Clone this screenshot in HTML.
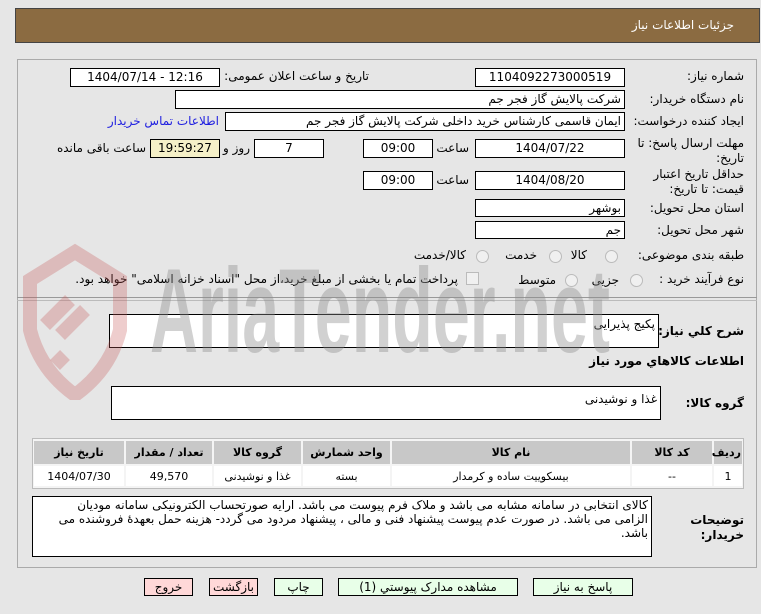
<!DOCTYPE html>
<html><head><meta charset="utf-8"><style>
body{margin:0;width:761px;height:614px;background:#e6e6e6;font-family:Tahoma,"DejaVu Sans","Liberation Sans",sans-serif;font-size:12px;color:#000;position:relative;overflow:hidden}
.a{position:absolute}
.box{position:absolute;background:#fff;border:1px solid #000;box-sizing:border-box;height:19px;line-height:17px;font-size:12px}
.c{text-align:center}.r{text-align:right;padding-right:3px;direction:rtl}
.lbl{position:absolute;direction:rtl;text-align:right;font-size:12px;white-space:nowrap}
.btn{position:absolute;top:578px;height:18px;border:1px solid #000;box-sizing:border-box;text-align:center;line-height:16px;font-size:12px;background:#e8ffe8}
.pink{background:#ffd8d8}
table{border-collapse:separate;border-spacing:2px;table-layout:fixed}
td{text-align:center;font-size:11px}
.rad{position:absolute;width:11px;height:11px;border-radius:50%;border:1px solid #bbb;background:#f0f0f0}
</style></head><body>
<div class="a" style="left:15px;top:8px;width:745px;height:35px;background:#8b6b41;border:1px solid #444;box-sizing:border-box"></div>
<div class="lbl" style="right:27px;top:18px;color:#fff;font-size:12px">جزئیات اطلاعات نیاز</div>
<div class="a" style="left:17px;top:59px;width:740px;height:509px;border:1px solid #aaa;box-sizing:border-box"></div>
<div class="a" style="left:17px;top:297px;width:740px;height:2px;border-top:1px solid #999;border-bottom:1px solid #bbb"></div>
<div class="lbl" style="right:17px;top:69px">شماره نیاز:</div>
<div class="box c" style="left:475px;top:68px;width:150px">1104092273000519</div>
<div class="lbl" style="right:392px;top:69px">تاریخ و ساعت اعلان عمومی:</div>
<div class="box c" style="left:70px;top:68px;width:150px">1404/07/14 - 12:16</div>
<div class="lbl" style="right:17px;top:92px">نام دستگاه خریدار:</div>
<div class="box r" style="left:175px;top:90px;width:450px">شرکت پالایش گاز فجر جم</div>
<div class="lbl" style="right:17px;top:114px">ایجاد کننده درخواست:</div>
<div class="box r" style="left:225px;top:112px;width:400px">ایمان قاسمی کارشناس خرید داخلی شرکت پالایش گاز فجر جم</div>
<div class="lbl" style="right:542px;top:114px;color:#2020e0">اطلاعات تماس خریدار</div>
<div class="lbl" style="right:17px;top:136px;line-height:15px">مهلت ارسال پاسخ: تا<br>تاریخ:</div>
<div class="box c" style="left:475px;top:139px;width:150px">1404/07/22</div>
<div class="lbl" style="right:292px;top:141px">ساعت</div>
<div class="box c" style="left:363px;top:139px;width:70px">09:00</div>
<div class="box c" style="left:254px;top:139px;width:70px">7</div>
<div class="lbl" style="right:511px;top:141px">روز و</div>
<div class="box c" style="left:150px;top:139px;width:70px;background:#f5f0c8">19:59:27</div>
<div class="lbl" style="right:615px;top:141px">ساعت باقی مانده</div>
<div class="lbl" style="right:17px;top:167px;line-height:15px">حداقل تاریخ اعتبار<br>قیمت: تا تاریخ:</div>
<div class="box c" style="left:475px;top:171px;width:150px">1404/08/20</div>
<div class="lbl" style="right:292px;top:173px">ساعت</div>
<div class="box c" style="left:363px;top:171px;width:70px">09:00</div>
<div class="lbl" style="right:17px;top:201px">استان محل تحویل:</div>
<div class="box r" style="left:475px;top:199px;width:150px;height:18px">بوشهر</div>
<div class="lbl" style="right:17px;top:223px">شهر محل تحویل:</div>
<div class="box r" style="left:475px;top:221px;width:150px;height:18px">جم</div>
<div class="lbl" style="right:17px;top:248px">طبقه بندی موضوعی:</div>
<div class="rad" style="left:605px;top:250px"></div><div class="lbl" style="right:174px;top:248px">کالا</div>
<div class="rad" style="left:549px;top:250px"></div><div class="lbl" style="right:224px;top:248px">خدمت</div>
<div class="rad" style="left:476px;top:250px"></div><div class="lbl" style="right:295px;top:248px">کالا/خدمت</div>
<div class="lbl" style="right:17px;top:272px">نوع فرآیند خرید :</div>
<div class="rad" style="left:630px;top:274px"></div><div class="lbl" style="right:142px;top:273px">جزیی</div>
<div class="rad" style="left:565px;top:274px"></div><div class="lbl" style="right:205px;top:273px">متوسط</div>
<div class="a" style="left:466px;top:272px;width:11px;height:11px;border:1px solid #bbb;background:#f0f0f0"></div>
<div class="lbl" style="right:303px;top:272px">پرداخت تمام یا بخشی از مبلغ خرید،از محل "اسناد خزانه اسلامی" خواهد بود.</div>
<div class="lbl" style="right:17px;top:324px;font-weight:bold">شرح کلي نياز:</div>
<div class="box r" style="left:109px;top:314px;width:550px;height:34px;line-height:18px">پکیج پذیرایی</div>
<div class="lbl" style="right:17px;top:354px;font-weight:bold">اطلاعات کالاهاي مورد نياز</div>
<div class="lbl" style="right:17px;top:396px;font-weight:bold">گروه کالا:</div>
<div class="box r" style="left:111px;top:386px;width:550px;height:34px;line-height:24px">غذا و نوشیدنی</div>
<div class="a" style="left:32px;top:438px;width:712px;height:51px;border:1px solid #bbb;box-sizing:border-box;background:#f4f4f4"></div>
<table class="a" style="left:32px;top:439px;width:712px;direction:rtl" dir="rtl">
<colgroup><col style="width:28px"><col style="width:80px"><col style="width:238px"><col style="width:87px"><col style="width:87px"><col style="width:86px"><col></colgroup>
<tr style="background:#c8c8c8;height:23px;font-weight:bold"><td>ردیف</td><td>کد کالا</td><td>نام کالا</td><td>واحد شمارش</td><td>گروه کالا</td><td>تعداد / مقدار</td><td>تاریخ نیاز</td></tr>
<tr style="background:#fff;height:20px"><td>1</td><td>--</td><td>بیسکوییت ساده و کرمدار</td><td>بسته</td><td>غذا و نوشیدنی</td><td>49,570</td><td>1404/07/30</td></tr>
</table>
<div class="lbl" style="right:17px;top:513px;font-weight:bold;line-height:15px">توضیحات<br>خریدار:</div>
<div class="box r" style="left:32px;top:496px;width:620px;height:61px;line-height:14px;font-size:12px;white-space:normal;padding:1px 3px 0 8px">کالای انتخابی در سامانه مشابه می باشد و ملاک فرم پیوست می باشد.  ارایه صورتحساب الکترونیکی سامانه مودیان الزامی می باشد. در صورت عدم پیوست پیشنهاد فنی و مالی ، پیشنهاد مردود می گردد- هزینه حمل بعهدهٔ فروشنده می باشد.</div>
<div class="btn" style="left:533px;width:100px">پاسخ به نیاز</div>
<div class="btn" style="left:338px;width:180px">مشاهده مدارک پیوستي (1)</div>
<div class="btn" style="left:274px;width:49px">چاپ</div>
<div class="btn pink" style="left:209px;width:49px">بازگشت</div>
<div class="btn pink" style="left:144px;width:49px">خروج</div>
<!-- watermark overlay -->
<svg class="a" style="left:0;top:240px;pointer-events:none" width="761" height="160">
<path d="M30 40 L75 12 L120 40 L120 90 Q110 130 75 155 Q40 130 30 90 Z" fill="none" stroke="rgba(200,90,90,0.3)" stroke-width="14"/>
<path d="M45 85 L70 60 M60 95 L85 70 M65 115 L55 125" stroke="rgba(200,90,90,0.3)" stroke-width="14"/>
<text x="150" y="112" font-size="120" font-family="Liberation Sans Narrow,Liberation Sans,sans-serif" font-weight="bold" fill="rgba(140,140,140,0.4)" textLength="460" lengthAdjust="spacingAndGlyphs">AriaTender.net</text>
</svg>
</body></html>
